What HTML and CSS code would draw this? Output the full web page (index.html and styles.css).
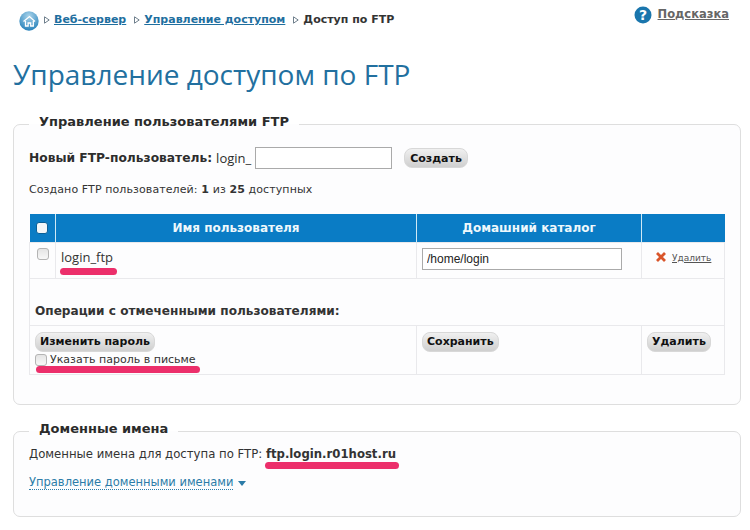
FILE: index.html
```html
<!DOCTYPE html>
<html lang="ru">
<head>
<meta charset="utf-8">
<title>Управление доступом по FTP</title>
<link rel="stylesheet" href="styles.css">
</head>
<body>
<div class="topbar">
  <nav class="crumbs">
    <svg class="home" width="20" height="20" viewBox="0 0 20 20">
      <defs><radialGradient id="g" cx="50%" cy="25%" r="80%"><stop offset="0" stop-color="#a9d3ea"/><stop offset="1" stop-color="#1f7db8"/></radialGradient></defs>
      <circle cx="10" cy="10" r="9.7" fill="url(#g)"/>
      <path d="M4.5 10.5 10.5 5.5 16 10.5M6.5 10v5h2.6v-3h2.6v3h2.6v-5" fill="none" stroke="#fff" stroke-width="1.3"/>
    </svg>
    <svg class="arr first" width="6" height="8" viewBox="0 0 6 8"><path d="M.5.8 5.2 4 .5 7.2Z" fill="#fff" stroke="#6f7f8c"/></svg><a href="#">Веб-сервер</a>
    <svg class="arr" width="6" height="8" viewBox="0 0 6 8"><path d="M.5.8 5.2 4 .5 7.2Z" fill="#fff" stroke="#6f7f8c"/></svg><a href="#">Управление доступом</a>
    <svg class="arr" width="6" height="8" viewBox="0 0 6 8"><path d="M.5.8 5.2 4 .5 7.2Z" fill="#fff" stroke="#6f7f8c"/></svg><b>Доступ по FTP</b>
  </nav>
  <div class="help">
    <svg width="18" height="18" viewBox="0 0 18 18"><circle cx="9" cy="9" r="8.5" fill="#1a76ad"/><text x="9" y="14" text-anchor="middle" class="q">?</text></svg>
    <a href="#">Подсказка</a>
  </div>
</div>
<h1>Управление доступом по FTP</h1>

<fieldset class="panel users">
  <legend>Управление пользователями FTP</legend>
  <div class="newuser">
    <b>Новый FTP-пользователь:</b> <span class="prefix">login_</span>
    <input class="field small" type="text">
    <button class="btn create" type="button">Создать</button>
  </div>
  <p class="count">Создано FTP пользователей: <b>1</b> из <b>25</b> доступных</p>
  <table>
    <colgroup><col class="c1"><col class="c2"><col class="c3"><col class="c4"></colgroup>
    <thead>
      <tr><th><input type="checkbox" class="hcheck"></th><th>Имя пользователя</th><th>Домашний каталог</th><th></th></tr>
    </thead>
    <tbody>
      <tr class="r1">
        <td class="cc"><input type="checkbox"></td>
        <td class="name"><span class="mark m-login">login_ftp</span></td>
        <td><input class="field dir" type="text" value="/home/login"></td>
        <td class="del"><svg width="12" height="12" viewBox="0 0 12 12"><path d="M2 2 10 10M10 2 2 10" stroke="#d9552b" stroke-width="2.8"/></svg><a href="#">Удалить</a></td>
      </tr>
      <tr class="r2"><td colspan="4"><b>Операции с отмеченными пользователями:</b></td></tr>
      <tr class="r3">
        <td colspan="2">
          <button class="btn" type="button">Изменить пароль</button>
          <label class="mail mark m-mail"><input type="checkbox">Указать пароль в письме</label>
        </td>
        <td><button class="btn" type="button">Сохранить</button></td>
        <td><button class="btn" type="button">Удалить</button></td>
      </tr>
    </tbody>
  </table>
</fieldset>

<fieldset class="panel domains">
  <legend>Доменные имена</legend>
  <p class="dline">Доменные имена для доступа по FTP: <b class="mark m-dom">ftp.login.r01host.ru</b></p>
  <p class="manage"><a href="#">Управление доменными именами</a><span class="tri"></span></p>
</fieldset>
</body>
</html>
```

FILE: styles.css
```css
* { box-sizing: border-box; }
html, body { margin: 0; padding: 0; }
body {
  width: 750px;
  height: 530px;
  overflow: hidden;
  padding: 6px 9px 0 13px;
  background: #fff;
  color: #333;
  font: 11px "DejaVu Sans", Verdana, sans-serif;
}
.topbar { display: flex; justify-content: space-between; height: 46px; }
.crumbs { display: flex; align-items: center; height: 26px; padding: 1px 0 0 6px; font-size: 11px; }
.crumbs a { color: #1f6f9f; font-weight: bold; }
.crumbs b { color: #333; }
.home { margin-right: 5px; margin-top: 2px; }
.arr { margin: 0 4px 0 8px; }
.arr.first { margin-left: 0; }
.help { display: flex; align-items: flex-start; gap: 6px; padding: 0 12px 0 0; height: 20px; }
.help a { color: #666; font-weight: bold; font-size: 11.5px; line-height: 16px; }
.q { fill: #fff; font: bold 14px "DejaVu Sans", sans-serif; }
h1 {
  margin: 0 0 12px;
  height: 50px;
  color: #22709f;
  font: normal 28px/44px "Open Sans", "DejaVu Sans", sans-serif;
}
.panel {
  margin: 0;
  width: 728px;
  border: 1px solid #dedede;
  border-radius: 7px;
  background: #fdfdfe;
}
.panel legend {
  margin-left: 0;
  padding: 0 10px 4px;
  color: #2b2b2b;
  font-size: 13px;
  font-weight: bold;
  line-height: 16px;
}
.users { height: 291px; padding: 0 15px; }
.domains { height: 96px; margin-top: 16px; padding: 5px 15px 0; }
.newuser { display: flex; align-items: center; height: 24px; margin-top: 12px; font-size: 12.25px; color: #2d2d2d; gap: 4px; }
.prefix { font-family: "Open Sans", sans-serif; font-size: 13px; }
.field { border: 1px solid #aaa; background: #fff; font: 12px "Liberation Sans", Arial, sans-serif; color: #222; padding: 0 4px; height: 22px; }
.small { width: 137px; margin-right: 8px; }
.btn {
  height: 20px;
  padding: 0 4px;
  border: 1px solid #d8d8d8;
  border-radius: 8px;
  background: linear-gradient(#f0f0f0, #cfcfcf);
  color: #111;
  font: bold 11px "DejaVu Sans", Verdana, sans-serif;
}
.create { padding: 0 5px; }
.count { margin: 13px 0 17px; font-size: 11px; letter-spacing: .1px; line-height: 14px; color: #333; }
table { width: 695px; border-collapse: collapse; table-layout: fixed; }
.c1 { width: 26px; }
.c2 { width: 361px; }
.c3 { width: 225px; }
.c4 { width: 83px; }
th {
  height: 28px;
  background: #0a7cc5;
  border-left: 1px solid #cfe9f5;
  color: #eef8fc;
  font-size: 12px;
  font-weight: bold;
  padding: 0;
}
th:first-child { border-left: 0; }
td { border: 1px solid #e9e9ec; padding: 0; vertical-align: top; }
input[type=checkbox] {
  appearance: none;
  margin: 0;
  width: 12px;
  height: 12px;
  border: 1px solid #b4b4b4;
  border-radius: 3px;
  background: linear-gradient(#e4e4e4, #f8f8f8);
}
input.hcheck { display: block; margin: 0 auto; border-color: #0a5f96; background: #f2f6f8; }
.r1 { height: 36px; }
.cc { text-align: center; padding-top: 5px; }
.name { padding: 5px 5px 0; font: 13px "Open Sans", sans-serif; color: #333; }
.dir { width: 200px; margin: 5px 0 0 5px; }
.del { padding: 8px 0 0 13px; font-size: 9px; line-height: 12px; }
.del svg { vertical-align: -2px; margin-right: 5px; }
.del a { color: #555; }
.r2 { height: 47px; }
.r2 td { padding: 25px 0 0 5px; font-size: 12.1px; line-height: 15px; color: #333; }
.r3 { height: 49px; }
.r3 td { padding: 6px 0 0 5px; }
.mail { display: flex; align-items: center; gap: 3px; margin-top: 1px; font-size: 11px; line-height: 14px; color: #333; width: 165px; white-space: nowrap; }
.mark { position: relative; display: inline-block; }
.mail.mark { display: flex; }
.mark::after {
  content: "";
  position: absolute;
  height: 7px;
  background: #ec2f6b;
  border-radius: 4px;
}
.m-login::after { left: -1px; top: 20px; width: 57px; }
.m-mail::after { left: 1px; top: 13px; width: 164px; }
.m-dom::after { left: -1px; top: 16px; width: 134px; }
.dline { margin: 0; font-size: 11.7px; line-height: 16px; color: #333; }
.manage { margin: 13px 0 0; font-size: 11.5px; line-height: 14px; }
.manage a { color: #2c7ca8; text-decoration: none; border-bottom: 1px dotted #2c7ca8; }
.tri {
  display: inline-block;
  margin-left: 5px;
  border-top: 5px solid #2c7ca8;
  border-left: 4.5px solid transparent;
  border-right: 4.5px solid transparent;
}
```
